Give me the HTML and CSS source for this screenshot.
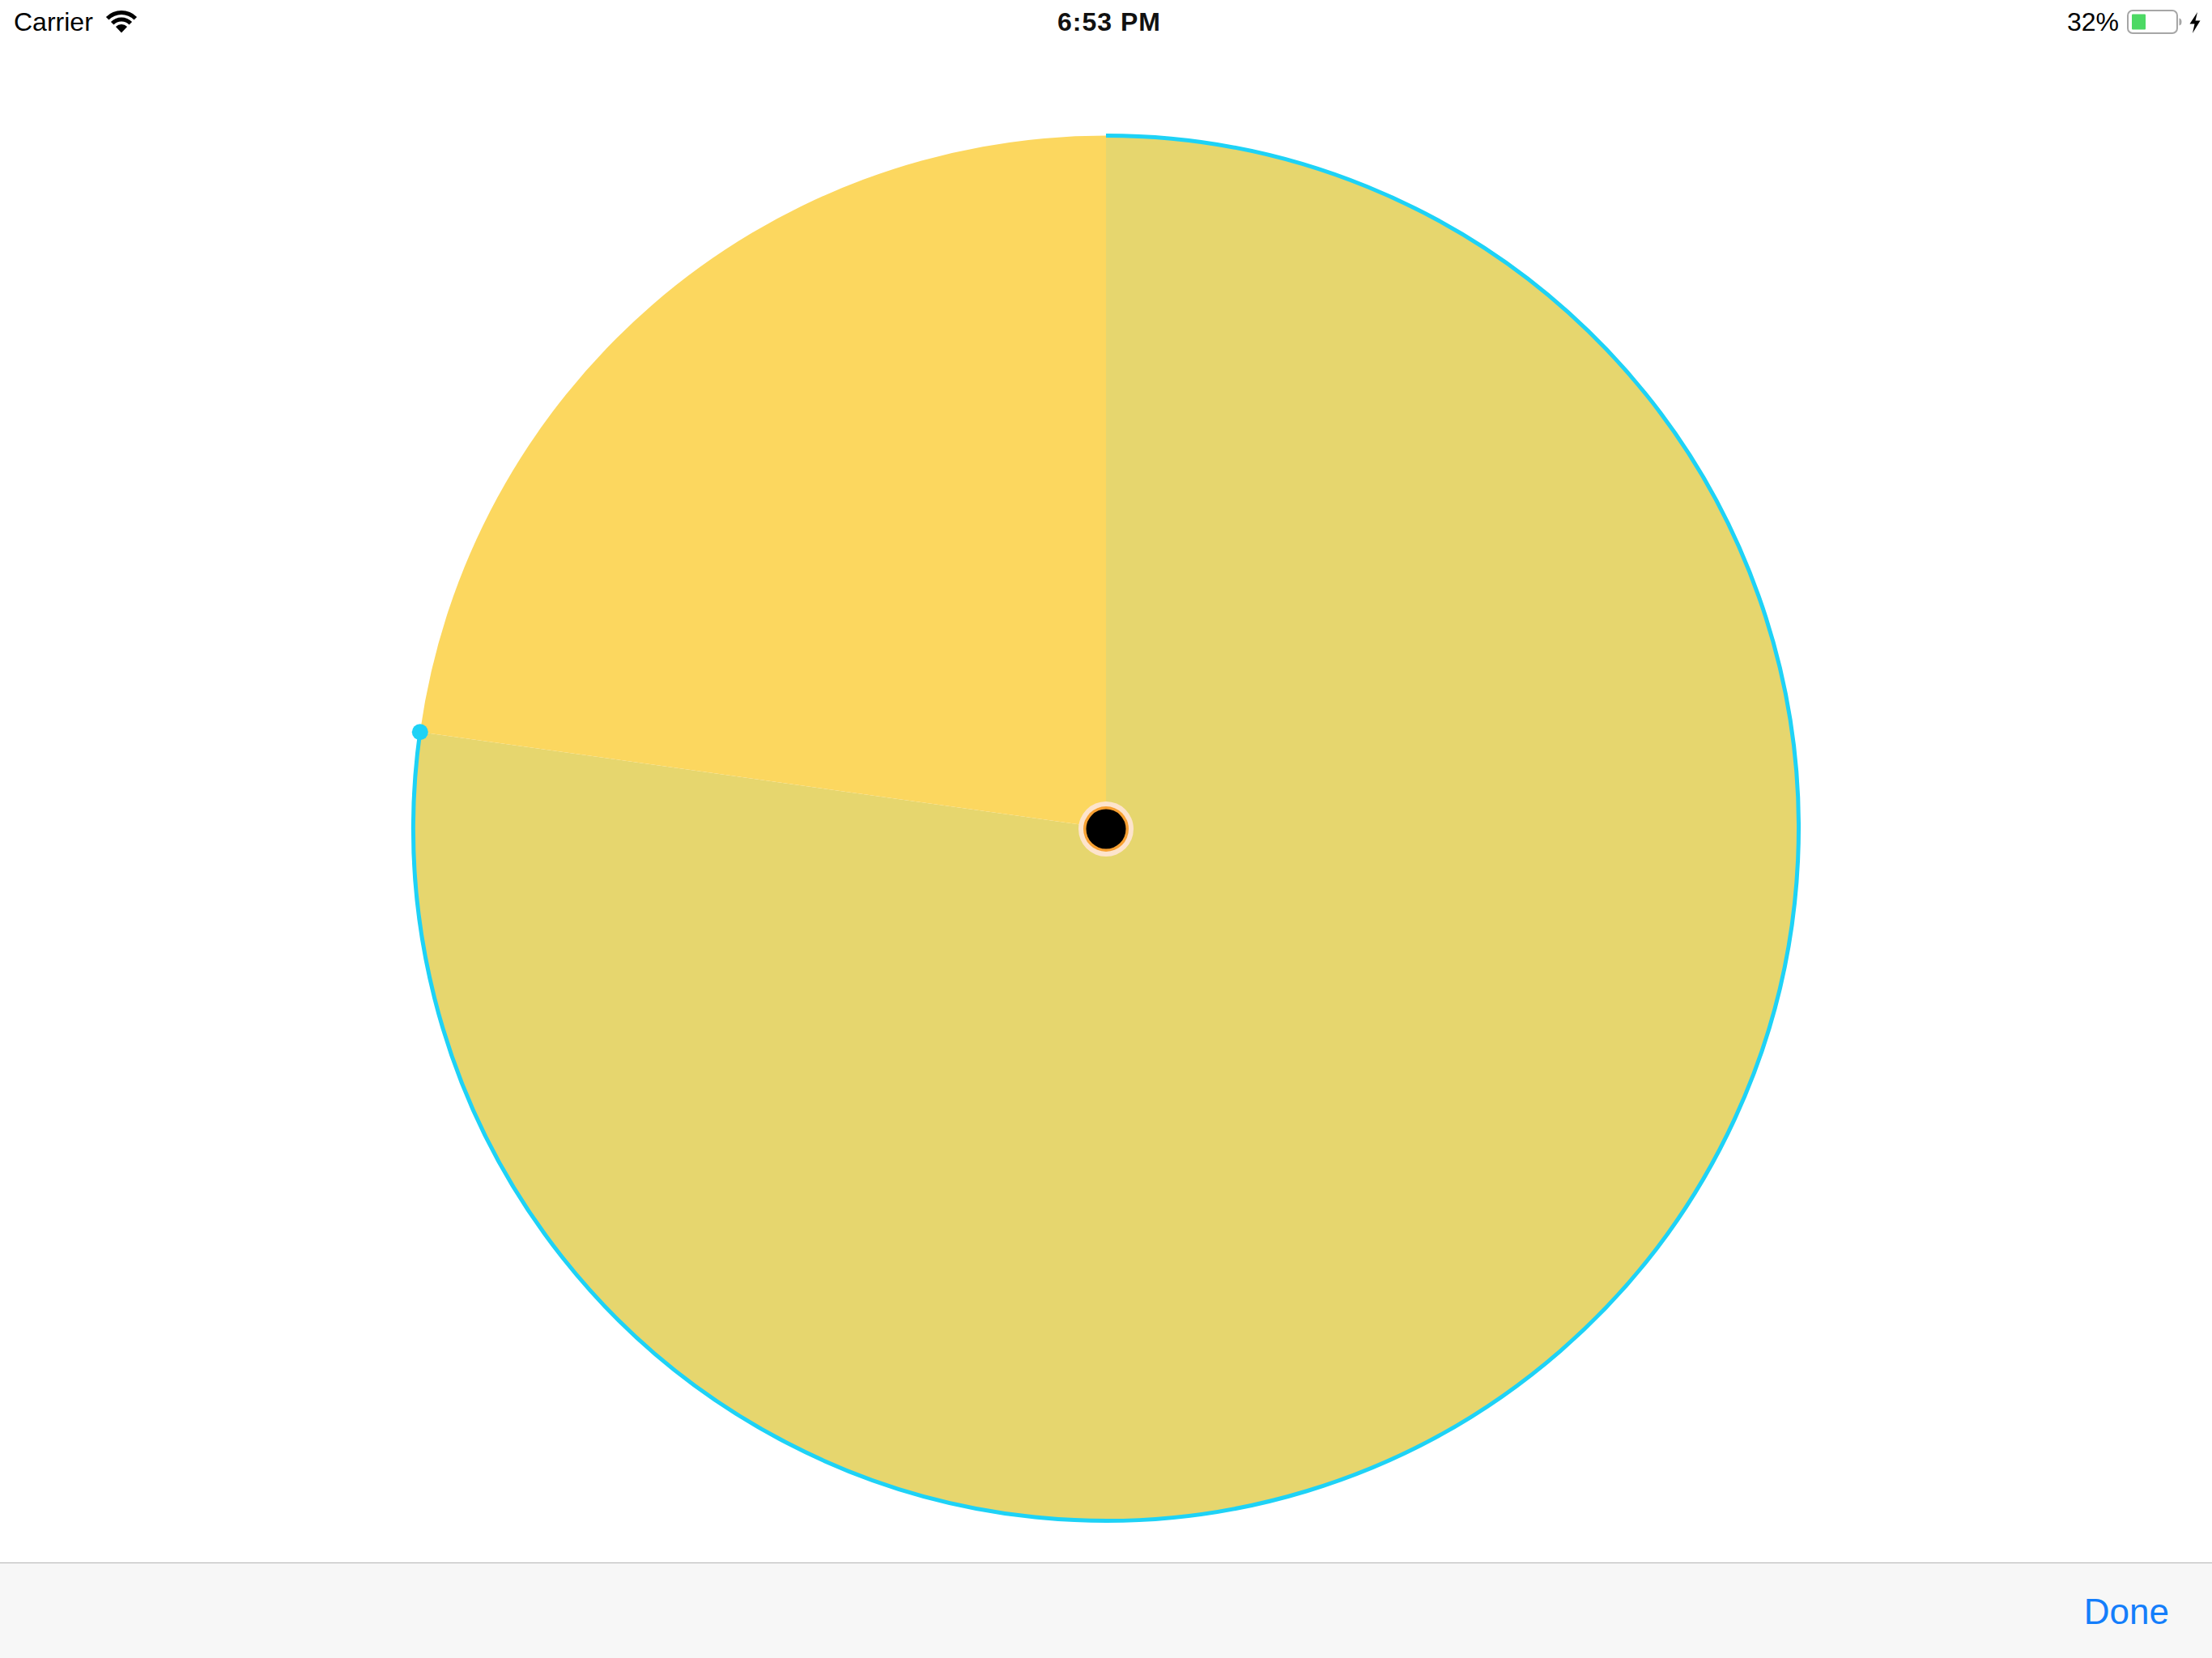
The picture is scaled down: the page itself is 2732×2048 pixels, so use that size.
FILE: index.html
```html
<!DOCTYPE html>
<html lang="en">
<head>
<meta charset="utf-8">
<title>Pie Progress</title>
<link rel="stylesheet" href="styles.css">
</head>
<body>
<div class="screen">
  <header class="status-bar">
    <div class="status-left">
      <span class="carrier">Carrier</span>
      <svg class="wifi" viewBox="-1 0 40 28" width="40" height="28" aria-hidden="true">
        <path d="M-0.09 7.91 A27 27 0 0 1 38.09 7.91 L34.56 11.44 A22 22 0 0 0 3.44 11.44 Z" fill="#000"/>
        <path d="M5.92 13.92 A18.5 18.5 0 0 1 32.08 13.92 L28.55 17.45 A13.5 13.5 0 0 0 9.45 17.45 Z" fill="#000"/>
        <path d="M19 27.5 L11.93 19.93 A10 10 0 0 1 26.07 19.93 Z" fill="#000"/>
      </svg>
    </div>
    <div class="status-time">6:53 PM</div>
    <div class="status-right">
      <span class="percent">32%</span>
      <svg class="battery" viewBox="0 0 70 31" width="70" height="31" aria-hidden="true">
        <rect x="1" y="1" width="61" height="28" rx="6" ry="6" fill="#fff" stroke="#a6a6a6" stroke-width="2"/>
        <rect x="6" y="5.5" width="17" height="19" rx="1" fill="#4cd964"/>
        <path d="M64.5 10.5 Q67.5 11 67.5 15 Q67.5 19 64.5 19.5 Z" fill="#a6a6a6"/>
      </svg>
      <svg class="bolt" viewBox="0 0 16 26" width="16" height="26" aria-hidden="true">
        <path d="M11 0 L1.5 14.5 L7.5 14.5 L5 26 L14.5 10.5 L8.5 10.5 Z" fill="#000"/>
      </svg>
    </div>
  </header>

  <main class="canvas">
    <svg class="pie" viewBox="0 53 2732 1877" width="2732" height="1877" aria-label="Progress pie">
      <path d="M1366 1023 L1366 167.5 A855.5 855.5 0 1 1 518.8 904.2 Z" fill="#e6d66e"/>
      <path d="M1366 1023 L1366 167.5 A855.5 855.5 0 0 0 518.8 904.2 Z" fill="#fcd75f"/>
      <path d="M1366 167.5 A855.5 855.5 0 1 1 518.8 904.2" fill="none" stroke="#1ed2f6" stroke-width="5"/>
      <circle cx="518.8" cy="904.2" r="10" fill="#1ed2f6"/>
      <circle cx="1366" cy="1024" r="34" fill="#fde4cc"/>
      <circle cx="1366" cy="1024" r="28" fill="#f7a032"/>
      <circle cx="1366" cy="1024" r="24.5" fill="#000"/>
    </svg>
  </main>

  <footer class="toolbar">
    <span class="done">Done</span>
  </footer>
</div>
</body>
</html>
```

FILE: styles.css
```css
html, body {
  margin: 0;
  padding: 0;
  background: #ffffff;
}

.screen {
  width: 2732px;
  height: 2048px;
  display: flex;
  flex-direction: column;
  overflow: hidden;
  font-family: "Liberation Sans", Arial, sans-serif;
  color: #000;
}

.status-bar {
  height: 53px;
  flex: 0 0 53px;
  display: grid;
  grid-template-columns: 1fr auto 1fr;
  align-items: center;
  padding: 0 13px 0 17px;
  font-size: 32px;
  line-height: 1;
}

.status-left {
  display: flex;
  align-items: center;
  gap: 15px;
}

.carrier {
  font-weight: 400;
}

.wifi {
  display: block;
  margin-top: 1px;
}

.status-time {
  font-weight: 600;
  letter-spacing: 1px;
  padding-left: 4px;
  color: #111;
}

.status-right {
  justify-self: end;
  display: flex;
  align-items: center;
}

.percent {
  margin-right: 10px;
}

.battery {
  display: block;
  margin-top: 2px;
}

.bolt {
  display: block;
  margin-left: 6px;
  margin-top: 2px;
}

.canvas {
  flex: 1 1 auto;
  display: flex;
}

.pie {
  display: block;
}

.toolbar {
  flex: 0 0 117px;
  height: 117px;
  border-top: 1px solid #b4b4b4;
  background: #f7f7f7;
  display: flex;
  align-items: center;
  justify-content: flex-end;
  padding-right: 53px;
}

.done {
  font-size: 44px;
  color: #147efb;
  line-height: 1;
  margin-top: 2px;
}
```
